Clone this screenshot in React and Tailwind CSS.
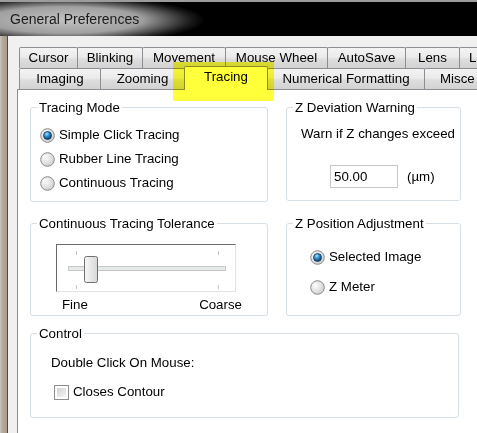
import React from "react";

const row1 = [
  { label: "Cursor", w: "w-[59px]" },
  { label: "Blinking", w: "w-[66px]" },
  { label: "Movement", w: "w-[84px]" },
  { label: "Mouse Wheel", w: "w-[103px]" },
  { label: "AutoSave", w: "w-[79px]" },
  { label: "Lens", w: "w-[55px]" },
  { label: "L", w: "w-[60px]", clip: "pl-[9px]" },
];

const row2 = [
  { label: "Imaging", w: "w-[82px]" },
  { label: "Zooming", w: "w-[85px]" },
  { label: "Tracing", w: "w-[84px]", active: true },
  { label: "Numerical Formatting", w: "w-[158px]" },
  { label: "Misce", w: "w-[90px]", clip: "pl-[15px]" },
];

const Tab = ({ tab, first }) => {
  if (tab.active) {
    return (
      <div
        className={`${tab.w} relative z-10 -ml-px -mt-[2px] flex h-[24px] shrink-0 items-center justify-center rounded-t-[2px] border-x border-t border-[#8c8e94] bg-white pb-[3px]`}
      >
        {tab.label}
      </div>
    );
  }
  return (
    <div
      className={`${tab.w} ${first ? "" : "-ml-px"} flex h-full shrink-0 items-center overflow-hidden whitespace-nowrap rounded-t-[2px] border-x border-t border-[#8c8e94] bg-[linear-gradient(#f3f3f3_0%,#ebebeb_45%,#dedede_55%,#d2d2d2_100%)] ${tab.clip ? `justify-start ${tab.clip}` : "justify-center"}`}
    >
      {tab.label}
    </div>
  );
};

const Radio = ({ checked }) => (
  <svg width="15" height="15" viewBox="0 0 15 15" className="shrink-0">
    <defs>
      <radialGradient id="rb" cx="35%" cy="35%" r="70%">
        <stop offset="0%" stopColor="#fdfdfd" />
        <stop offset="100%" stopColor="#cfcfcf" />
      </radialGradient>
      <radialGradient id="rd" cx="40%" cy="30%" r="70%">
        <stop offset="0%" stopColor="#aee4ff" />
        <stop offset="45%" stopColor="#2d8fd0" />
        <stop offset="100%" stopColor="#0d3e66" />
      </radialGradient>
    </defs>
    <circle cx="7.5" cy="7.5" r="6.8" fill="url(#rb)" stroke="#8a8a8a" strokeWidth="1" />
    {checked && <circle cx="7.5" cy="7.5" r="4" fill="url(#rd)" stroke="#1a3550" strokeWidth="0.8" />}
  </svg>
);

const Group = ({ title, className, children }) => (
  <fieldset className={`rounded-[3px] border border-[#d5dfe5] ${className}`}>
    <legend className="ml-[6px] px-[2px] leading-[15px]">{title}</legend>
    {children}
  </fieldset>
);

const Slider = () => (
  <div className="ml-[25px] mt-[13px] h-[48px] w-[180px] border-t border-l border-t-[#6a6a6a] border-l-[#6a6a6a] border-r border-b border-r-[#e3e3e3] border-b-[#e3e3e3] bg-white">
    <svg width="178" height="46" viewBox="0 0 178 46">
      <defs>
        <linearGradient id="th" x1="0" y1="0" x2="1" y2="0">
          <stop offset="0%" stopColor="#f7f7f7" />
          <stop offset="100%" stopColor="#d7d7d7" />
        </linearGradient>
      </defs>
      <line x1="19.5" y1="6" x2="19.5" y2="10" stroke="#c4c4c4" />
      <line x1="161.5" y1="6" x2="161.5" y2="10" stroke="#c4c4c4" />
      <line x1="19.5" y1="40" x2="19.5" y2="44" stroke="#c4c4c4" />
      <line x1="161.5" y1="40" x2="161.5" y2="44" stroke="#c4c4c4" />
      <rect x="11.5" y="21.5" width="157" height="4" fill="#e7eaea" stroke="#c8c8c8" />
      <rect x="27.5" y="11.5" width="13" height="26" rx="2" fill="url(#th)" stroke="#6f6f6f" />
    </svg>
  </div>
);

export default function App() {
  return (
    <div className="relative isolate h-[433px] w-[477px] overflow-hidden bg-black font-['Liberation_Sans',Arial,sans-serif] text-[13.3px] text-black">
      {/* title bar */}
      <div className="flex h-[36px] items-center border-t-[2px] border-[#9c9c9c] bg-[radial-gradient(ellipse_140px_24px_at_65px_18px,#c2c2c2_0%,#a0a0a0_55%,#1a1a1a_90%,#000_100%)] pl-[10px]">
        <span className="text-[14px] text-[#1b1b1b]">General Preferences</span>
      </div>

      <div className="flex h-[397px]">
        <div className="w-[8px] shrink-0 border-r border-[#4a4a4a] bg-[linear-gradient(90deg,#c9c9c9_0%,#b7ab9c_30%,#a89b8b_100%)]" />
        <div className="flex min-w-0 flex-1 flex-col bg-[#f0f0f0] pl-[9px] pt-[11px]">
          <div className="ml-[2px] flex h-[21px]">
            {row1.map((t, i) => (
              <Tab key={t.label} tab={t} first={i === 0} />
            ))}
          </div>
          <div className="ml-[2px] flex h-[21px]">
            {row2.map((t, i) => (
              <Tab key={t.label} tab={t} first={i === 0} />
            ))}
          </div>

          {/* tab page */}
          <div className="flex-1 border-l border-t border-[#8c8e94] bg-white pl-[12px] pt-[10px]">
            <div className="grid grid-cols-[238px_175px] gap-x-[18px]">
              <Group title="Tracing Mode" className="h-[102px]">
                <div className="flex flex-col pl-[9px] pt-[8px]">
                  {["Simple Click Tracing", "Rubber Line Tracing", "Continuous Tracing"].map((l, i) => (
                    <div key={l} className="flex h-[24px] items-center gap-[4px]">
                      <Radio checked={i === 0} />
                      <span>{l}</span>
                    </div>
                  ))}
                </div>
              </Group>

              <Group title="Z Deviation Warning" className="h-[101px]">
                <div className="pl-[14px] pt-[10px]">
                  <div className="h-[18px] leading-[18px]">Warn if Z changes exceed</div>
                  <div className="mt-[22px] flex items-center pl-[29px]">
                    <div className="flex h-[23px] w-[68px] items-center border border-[#c5c8cc] pl-[3px]">50.00</div>
                    <span className="ml-[9px]">(µm)</span>
                  </div>
                </div>
              </Group>

              <Group title="Continuous Tracing Tolerance" className="mt-[14px] h-[100px]">
                <Slider />
                <div className="ml-[31px] mt-[5px] flex w-[180px] justify-between leading-[16px]">
                  <span>Fine</span>
                  <span>Coarse</span>
                </div>
              </Group>

              <Group title="Z Position Adjustment" className="mt-[14px] h-[100px]">
                <div className="flex flex-col gap-[6px] pl-[23px] pt-[14px]">
                  {["Selected Image", "Z Meter"].map((l, i) => (
                    <div key={l} className="flex h-[24px] items-center gap-[4px]">
                      <Radio checked={i === 0} />
                      <span>{l}</span>
                    </div>
                  ))}
                </div>
              </Group>

              <Group title="Control" className="col-span-2 mt-[10px] h-[92px] w-[429px]">
                <div className="pl-[20px] pt-[12px]">
                  <div className="h-[20px] leading-[20px]">Double Click On Mouse:</div>
                  <div className="mt-[9px] flex h-[20px] items-center gap-[4px] pl-[3px]">
                    <div className="h-[15px] w-[15px] border border-[#8e8f8f] bg-white p-[2px]">
                      <div className="h-full w-full bg-[linear-gradient(135deg,#d2d2d2,#f5f5f5)]" />
                    </div>
                    <span>Closes Contour</span>
                  </div>
                </div>
              </Group>
            </div>
          </div>
        </div>
      </div>

      {/* yellow highlight */}
      <div className="absolute left-[173px] top-[62px] z-20 h-[39px] w-[101px] bg-[#ffff3a] mix-blend-multiply" />
    </div>
  );
}
